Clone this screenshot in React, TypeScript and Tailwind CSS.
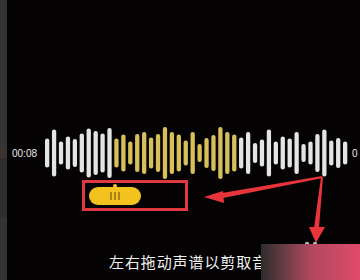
import React from "react";

const bars: { h: number; on: boolean }[] = [
  29, 47, 23, 33, 28, 39, 49, 44, 39, 50,
].map((h) => ({ h, on: false }))
  .concat(
    [29, 37, 23, 38, 42, 31, 38, 52, 42, 37, 25, 42, 18, 30, 36, 52, 42, 37].map(
      (h) => ({ h, on: true })
    )
  )
  .concat(
    [31, 42, 20, 27, 47, 23, 33, 29, 42, 18, 23, 38, 47, 25, 30, 23].map((h) => ({
      h,
      on: false,
    }))
  );

const Waveform: React.FC = () => (
  <svg width="304" height="54" viewBox="0 0 304 54" className="shrink-0">
    {bars.map((b, i) => (
      <rect
        key={i}
        x={i * 6.93}
        y={27 - b.h / 2}
        width="4.3"
        height={b.h}
        rx="2.1"
        fill={b.on ? "#d7c05a" : "#e4e4e4"}
      />
    ))}
  </svg>
);

const App: React.FC = () => {
  return (
    <main className="relative flex w-[360px] h-[280px] overflow-hidden bg-[#050203] font-['Liberation_Sans',sans-serif]">
      <div className="flex w-[7px] flex-col bg-[#343434]">
        <div className="h-[150px]" />
        <div className="h-[8px] bg-[#3d3234]" />
        <div className="h-[60px] bg-[#2e2e2e]" />
      </div>

      <section className="flex flex-1 flex-col pt-[126px]">
        <div className="flex h-[54px] items-center">
          <span className="ml-[5px] w-[33px] text-[10px] text-[#e8e8e8]">00:08</span>
          <Waveform />
          <span className="ml-[3px] text-[10px] text-[#e8e8e8]">0</span>
        </div>

        <div className="ml-[75px] flex h-[31px] w-[106px] items-center border-[3px] border-[#e0393f] pl-[4px]">
          <div className="relative flex h-[18px] w-[52px] items-center justify-center gap-[2px] rounded-full bg-[#f4c21f]">
            <span className="absolute -top-[3px] left-[24px] h-[4px] w-[4px] rounded-full bg-[#f4c21f]" />
            <span className="h-[8px] w-[2px] bg-[#a8861a]" />
            <span className="h-[8px] w-[2px] bg-[#a8861a]" />
            <span className="h-[8px] w-[2px] bg-[#a8861a]" />
          </div>
        </div>

        <div className="mt-[40px] pl-[102px] text-[15px] tracking-[0.9px] text-[#f0f0f0] font-['Noto_Sans_CJK_SC',sans-serif] whitespace-nowrap">
          左右拖动声谱以剪取音频
        </div>
      </section>

      <svg className="pointer-events-none absolute inset-0" width="360" height="280">
        <polygon points="322,176 323,178 223,198 222,193" fill="#e8343b" />
        <polygon points="204,197 223,191 224,203" fill="#e8343b" />
        <polygon points="321,177 323,177 319,228 314,228" fill="#e8343b" />
        <polygon points="309,227 325,227 316,243" fill="#e8343b" />
        <circle cx="307" cy="244" r="2.2" fill="#b5b5b5" />
        <circle cx="315" cy="244" r="2.2" fill="#b5b5b5" />
      </svg>

      <div className="absolute left-[261px] top-[244px] h-[36px] w-[99px] bg-linear-to-r from-[#2d2c2d] via-[#b0485f] to-[#df4a69]" />
    </main>
  );
};

export default App;
